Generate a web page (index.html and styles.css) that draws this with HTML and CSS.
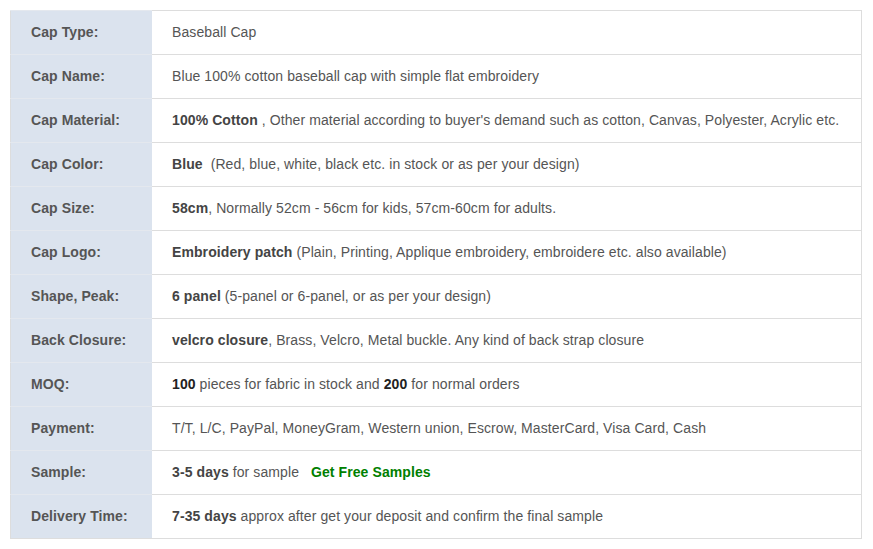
FILE: index.html
```html
<!DOCTYPE html>
<html>
<head>
<meta charset="utf-8">
<link rel="stylesheet" href="styles.css">
</head>
<body>
<table class="spec">
<tr><th>Cap Type:</th><td>Baseball Cap</td></tr>
<tr><th>Cap Name:</th><td>Blue 100% cotton baseball cap with simple flat embroidery</td></tr>
<tr><th>Cap Material:</th><td><b>100% Cotton</b> , Other material according to buyer's demand such as cotton, Canvas, Polyester, Acrylic etc.</td></tr>
<tr><th>Cap Color:</th><td><b>Blue</b>&nbsp; (Red, blue, white, black etc. in stock or as per your design)</td></tr>
<tr><th>Cap Size:</th><td><b>58cm</b>, Normally 52cm - 56cm for kids, 57cm-60cm for adults.</td></tr>
<tr><th>Cap Logo:</th><td><b>Embroidery patch</b> (Plain, Printing, Applique embroidery, embroidere etc. also available)</td></tr>
<tr><th>Shape, Peak:</th><td><b>6 panel</b> (5-panel or 6-panel, or as per your design)</td></tr>
<tr><th>Back Closure:</th><td><b>velcro closure</b>, Brass, Velcro, Metal buckle. Any kind of back strap closure</td></tr>
<tr><th>MOQ:</th><td><b class="dark">100</b> pieces for fabric in stock and <b class="dark">200</b> for normal orders</td></tr>
<tr><th>Payment:</th><td>T/T, L/C, PayPal, MoneyGram, Western union, Escrow, MasterCard, Visa Card, Cash</td></tr>
<tr><th>Sample:</th><td><b>3-5 days</b> for sample &nbsp; <a class="free" href="#">Get Free Samples</a></td></tr>
<tr><th>Delivery Time:</th><td><b>7-35 days</b> approx after get your deposit and confirm the final sample</td></tr>
</table>
</body>
</html>
```

FILE: styles.css
```css
html, body {
  margin: 0;
  padding: 0;
  background: #fff;
}
body {
  padding: 10px;
  font-family: "Liberation Sans", Arial, sans-serif;
  font-size: 14px;
  letter-spacing: 0.09px;
  color: #555;
}
.spec {
  border-collapse: collapse;
  width: 852px;
  border: 1px solid #ddd;
}
.spec th, .spec td {
  height: 42px;
  padding: 0 20px 1px;
  border-top: 1px solid #ddd;
  vertical-align: middle;
  text-align: left;
  white-space: nowrap;
}
.spec th {
  width: 101px;
  background: #dbe3ee;
  font-weight: bold;
  color: #555;
  border-top-color: #e4e8ee;
}
.spec td {
  background: #fff;
}
.spec b {
  color: #444;
}
.spec b.dark {
  color: #222;
}
.free {
  color: #008000;
  font-weight: bold;
  text-decoration: none;
}
```
